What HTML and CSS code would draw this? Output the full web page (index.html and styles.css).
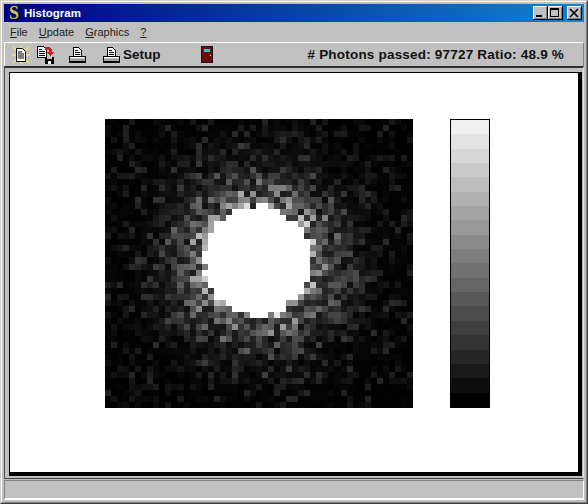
FILE: index.html
```html
<!DOCTYPE html>
<html lang="en">
<head>
    <meta charset="UTF-8">
    <title>Histogram</title>
    <link rel="stylesheet" href="styles.css">
</head>
<body>
    <div class="window">
        <div class="window-inner">

            <!-- Title bar -->
            <div class="titlebar">
                <span class="app-logo">S</span>
                <span class="title">Histogram</span>
                <div class="win-buttons">
                    <button class="win-btn">
                        <svg width="14" height="12" viewBox="0 0 14 12" shape-rendering="crispEdges"><rect x="3" y="8" width="6" height="2" fill="#000"/></svg>
                    </button>
                    <button class="win-btn">
                        <svg width="14" height="12" viewBox="0 0 14 12" shape-rendering="crispEdges"><path d="M2 1h9v9H2z M3 3v6h7V3z" fill="#000" fill-rule="evenodd"/></svg>
                    </button>
                    <button class="win-btn win-close">
                        <svg width="14" height="12" viewBox="0 0 14 12"><path d="M3 2l8 8M11 2l-8 8" stroke="#000" stroke-width="1.6" fill="none"/></svg>
                    </button>
                </div>
            </div>

            <!-- Menu -->
            <div class="menubar">
                <span class="menu-item"><u>F</u>ile</span>
                <span class="menu-item"><u>U</u>pdate</span>
                <span class="menu-item"><u>G</u>raphics</span>
                <span class="menu-item"><u>?</u></span>
            </div>

            <!-- Toolbar -->
            <div class="toolbar">
                <svg class="tool tool-new" width="18" height="18" viewBox="0 0 18 18">
                    <path d="M1 1l4 4M17 1l-4 4M1 17l4-4M17 17l-4-4M0 9h4M14 9h4M9 0v2M9 16v2" stroke="#f0e860" stroke-width="1.6"/>
                    <path d="M4.5 2.5h6l3 3v10h-9z" fill="#fff" stroke="#000"/>
                    <path d="M6 6h4M6 8h6M6 10h6M6 12h6" stroke="#000"/>
                </svg>
                <svg class="tool tool-save" width="18" height="18" viewBox="0 0 18 18" shape-rendering="crispEdges">
                    <path d="M0.5 0.5h6l3 3v8h-9z" fill="#fff" stroke="#000"/>
                    <path d="M2 3h3M2 5h6M2 7h6M2 9h6" stroke="#000"/>
                    <path d="M8 1h4l2 2h1v3h2l-4 4-4-4h3V4H8z" fill="#e01818"/>
                    <path d="M8 11h9v7H8z" fill="#000"/>
                    <path d="M10 11h5v2h-5z" fill="#c0c0c0"/>
                    <path d="M11 15h3v3h-3z" fill="#fff"/>
                </svg>
                <svg class="tool tool-print" width="17" height="16" viewBox="0 0 17 16" shape-rendering="crispEdges">
                    <use href="#printer"/>
                </svg>
                <svg class="tool tool-setup" width="17" height="16" viewBox="0 0 17 16" shape-rendering="crispEdges">
                    <g id="printer">
                        <path d="M4.5 0.5h5l3 3v6h-8z" fill="#fff" stroke="#000"/>
                        <path d="M6 3h3M6 5h5M6 7h5" stroke="#000"/>
                        <path d="M0.5 9.5h16v5h-16z" fill="#c0c0c0" stroke="#000"/>
                        <path d="M1 10h15v1H1z" fill="#fff"/>
                        <path d="M1 12h15v2H1z" fill="#a0a0a0"/>
                        <path d="M0 15h17v1H0z" fill="#000"/>
                    </g>
                </svg>
                <span class="setup-label">Setup</span>
                <svg class="tool tool-exit" width="12" height="17" viewBox="0 0 12 17" shape-rendering="crispEdges">
                    <rect width="12" height="17" fill="#111"/>
                    <rect x="1" y="1" width="10" height="15" fill="#6e0a12"/>
                    <rect x="3" y="3" width="6" height="3" fill="#30c8c8"/>
                    <rect x="9" y="9" width="1" height="1" fill="#ddd"/>
                </svg>
                <span class="photon-status"># Photons passed: 97727 Ratio: 48.9 %</span>
            </div>

            <!-- Plot area -->
            <div class="client-frame">
                <div class="client">
                    <canvas id="heatmap" class="heatmap" width="308" height="289"></canvas>
                    <div id="colorbar" class="colorbar"></div>
                </div>
            </div>

            <!-- Status bar -->
            <div class="statusbar"></div>
        </div>
    </div>

    <script src="heatmap.js"></script>
</body>
</html>
```

FILE: styles.css
```css
html, body {
    margin: 0;
    padding: 0;
    background-color: #c0c0c0;
}

.window {
    box-sizing: border-box;
    width: 588px;
    height: 504px;
    border: 1px solid;
    border-color: #d4d0c8 #404040 #404040 #d4d0c8;
    background-color: #c0c0c0;
    font-family: "Liberation Sans", Arial, sans-serif;
    color: #000;
    overflow: hidden;
}

.window-inner {
    box-sizing: border-box;
    height: 100%;
    display: flex;
    flex-direction: column;
    border: 1px solid;
    border-color: #fff #808080 #808080 #fff;
    padding: 2px 2px 2px 2px;
}

/* Title bar */
.titlebar {
    height: 18px;
    flex: none;
    display: flex;
    align-items: center;
    background: linear-gradient(to right, #000080, #1084d0);
    color: #fff;
}

.app-logo {
    width: 20px;
    text-align: center;
    font-family: "Liberation Serif", serif;
    font-size: 18px;
    font-weight: bold;
    line-height: 18px;
    color: #d0c060;
    text-shadow: 1px 1px 0 #000, 2px 1px 0 #000;
}

.title {
    font-size: 11.5px;
    font-weight: bold;
}

.win-buttons {
    margin-left: auto;
    margin-right: 2px;
    display: flex;
}

.win-btn {
    width: 15px;
    height: 14px;
    padding: 0;
    display: block;
    border: none;
    background-color: #c0c0c0;
    box-shadow: inset -1px -1px 0 #000, inset 1px 1px 0 #fff, inset -2px -2px 0 #808080;
}

.win-btn svg {
    display: block;
}

.win-close {
    margin-left: 4px;
}

/* Menu */
.menubar {
    height: 19px;
    flex: none;
    display: flex;
    align-items: center;
    gap: 11px;
    padding-left: 6px;
    font-size: 11px;
    color: #222;
}

/* Toolbar */
.toolbar {
    height: 23px;
    flex: none;
    display: flex;
    align-items: center;
    border-top: 1px solid #fff;
    border-left: 1px solid #fff;
    border-right: 1px solid #808080;
    margin-top: 1px;
}

.tool {
    flex: none;
    display: block;
}

.tool-new {
    margin-left: 7px;
}

.tool-save {
    margin-left: 7px;
}

.tool-print {
    margin-left: 14px;
}

.tool-setup {
    margin-left: 17px;
}

.setup-label {
    margin-left: 3px;
    font-size: 13.5px;
    font-weight: bold;
    color: #111;
}

.tool-exit {
    margin-left: 40px;
}

.photon-status {
    margin-left: auto;
    margin-right: 19px;
    font-size: 13.5px;
    font-weight: bold;
    letter-spacing: 0.2px;
    color: #111;
}

/* Plot area */
.client-frame {
    flex: 1;
    display: flex;
    padding: 4px 1px 2px 4px;
    border-top: 2px solid #303030;
    border-left: 1px solid #505050;
    border-right: 1px solid #e0e0e0;
    border-bottom: 1px solid #404040;
}

.client {
    flex: 1;
    display: flex;
    align-items: flex-start;
    gap: 37px;
    padding: 46px 0 0 95px;
    background-color: #fff;
    border-top: 1px solid #000;
    border-left: 1px solid #000;
    border-right: 4px solid #000;
    border-bottom: 4px solid #000;
}

.heatmap {
    display: block;
    flex: none;
    background-color: #000;
}

.colorbar {
    box-sizing: border-box;
    width: 40px;
    height: 289px;
    flex: none;
    display: flex;
    flex-direction: column;
    border: 1px solid #000;
}

.color-step {
    flex: 1;
}

/* Status bar */
.statusbar {
    height: 17px;
    flex: none;
    margin-top: 1px;
    border-top: 1px solid #808080;
    border-left: 1px solid #808080;
    border-right: 1px solid #fff;
    border-bottom: 2px solid #fff;
}
```

FILE: heatmap.js
```js
// Photon counts on a 51 x 48 grid, drawn in grey levels
const COLS = 51;
const ROWS = 48;
const CENTER_X = 153;
const CENTER_Y = 142;
const SPOT_RADIUS = 54;

let seed = 72719;
function rand() {
    seed = (seed * 16807) % 2147483647;
    return seed / 2147483647;
}

function drawHeatmap() {
    const canvas = document.getElementById("heatmap");
    const ctx = canvas.getContext("2d");
    const cellW = canvas.width / COLS;
    const cellH = canvas.height / ROWS;

    for (let row = 0; row < ROWS; row++) {
        for (let col = 0; col < COLS; col++) {
            const x = (col + 0.5) * cellW - CENTER_X;
            const y = (row + 0.5) * cellH - CENTER_Y;
            const r = Math.sqrt(x * x + y * y) + (rand() - 0.5) * 5;

            let level = 255;
            if (r > SPOT_RADIUS) {
                const glow = 175 * Math.exp(-(r - SPOT_RADIUS) / 27);
                const noise = rand();
                level = glow * (0.2 + 1.15 * noise) + 34 * Math.pow(noise, 6);
            }
            level = Math.min(255, Math.round(level));

            ctx.fillStyle = `rgb(${level},${level},${level})`;
            const left = Math.round(col * cellW);
            const top = Math.round(row * cellH);
            ctx.fillRect(left, top, Math.round((col + 1) * cellW) - left, Math.round((row + 1) * cellH) - top);
        }
    }
}

function drawColorbar() {
    const bar = document.getElementById("colorbar");
    const steps = 20;
    for (let i = 0; i < steps; i++) {
        const level = Math.round(240 * (1 - i / (steps - 1)));
        const step = document.createElement("div");
        step.className = "color-step";
        step.style.backgroundColor = `rgb(${level},${level},${level})`;
        bar.appendChild(step);
    }
}

drawHeatmap();
drawColorbar();
```
